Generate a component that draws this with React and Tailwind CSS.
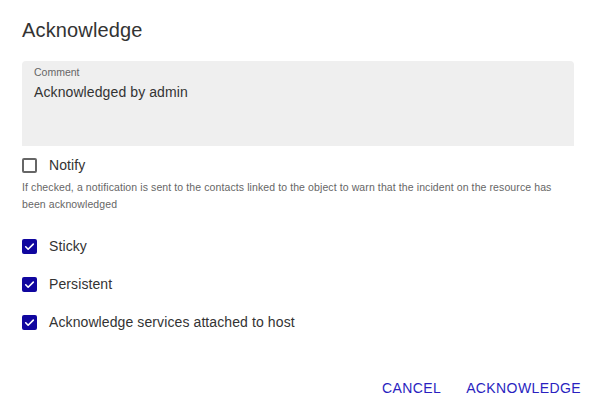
import React, { useState } from 'react';

function Box({ checked }) {
    if (checked) {
        return (
            <span className="w-[15px] h-[15px] rounded-[2px] bg-[#10069f] flex items-center justify-center shrink-0">
                <svg viewBox="0 0 24 24" className="w-[13px] h-[13px]">
                    <path d="M5 12.5l4.5 4.5L19 7.5" fill="none" stroke="white" strokeWidth="3" strokeLinecap="round" strokeLinejoin="round" />
                </svg>
            </span>
        );
    }
    return <span className="w-[15px] h-[15px] rounded-[2px] border-2 border-[#666] shrink-0" />;
}

function Check({ label, checked, onToggle }) {
    return (
        <label className="flex items-center gap-[12px] h-[18px] cursor-pointer" onClick={onToggle}>
            <Box checked={checked} />
            <span className="text-[14px] text-[#333] tracking-[0.1px]">{label}</span>
        </label>
    );
}

export default function App() {
    const [opts, setOpts] = useState({ notify: false, sticky: true, persistent: true, services: true });
    const toggle = (k) => setOpts((o) => ({ ...o, [k]: !o[k] }));

    return (
        <div className="w-[594px] h-[412px] bg-white flex flex-col" style={{ fontFamily: '"Liberation Sans", Arial, sans-serif' }}>
            <h2 className="text-[20px] text-[#333] px-[22px] pt-[16px] leading-[28px] tracking-[0.15px]">Acknowledge</h2>

            <div className="pl-[22px] pr-[20px] pt-[17px] flex flex-col">
                <div className="h-[85px] bg-[#efefef] rounded-t-[4px] px-[12px] pt-[4px]">
                    <div className="text-[10.5px] text-[#666] leading-[14px]">Comment</div>
                    <div className="text-[14px] text-[#333] leading-[20px] mt-[3px] tracking-[0.1px]">Acknowledged by admin</div>
                </div>

                <div className="mt-[10px]">
                    <Check label="Notify" checked={opts.notify} onToggle={() => toggle('notify')} />
                </div>
                <p className="text-[10.5px] text-[#666] leading-[17px] mt-[5px] tracking-[0.1px]">
                    If checked, a notification is sent to the contacts linked to the object to warn that the incident on the resource has been acknowledged
                </p>

                <div className="flex flex-col gap-[20px] mt-[24px]">
                    <Check label="Sticky" checked={opts.sticky} onToggle={() => toggle('sticky')} />
                    <Check label="Persistent" checked={opts.persistent} onToggle={() => toggle('persistent')} />
                    <Check label="Acknowledge services attached to host" checked={opts.services} onToggle={() => toggle('services')} />
                </div>
            </div>

            <div className="flex justify-end gap-[25px] px-[13px] mt-auto pb-[16px]">
                <button className="text-[14px] text-[#2a1fc0] leading-[16px] tracking-[0.4px]">CANCEL</button>
                <button className="text-[14px] text-[#2a1fc0] leading-[16px] tracking-[0.4px]">ACKNOWLEDGE</button>
            </div>
        </div>
    );
}
